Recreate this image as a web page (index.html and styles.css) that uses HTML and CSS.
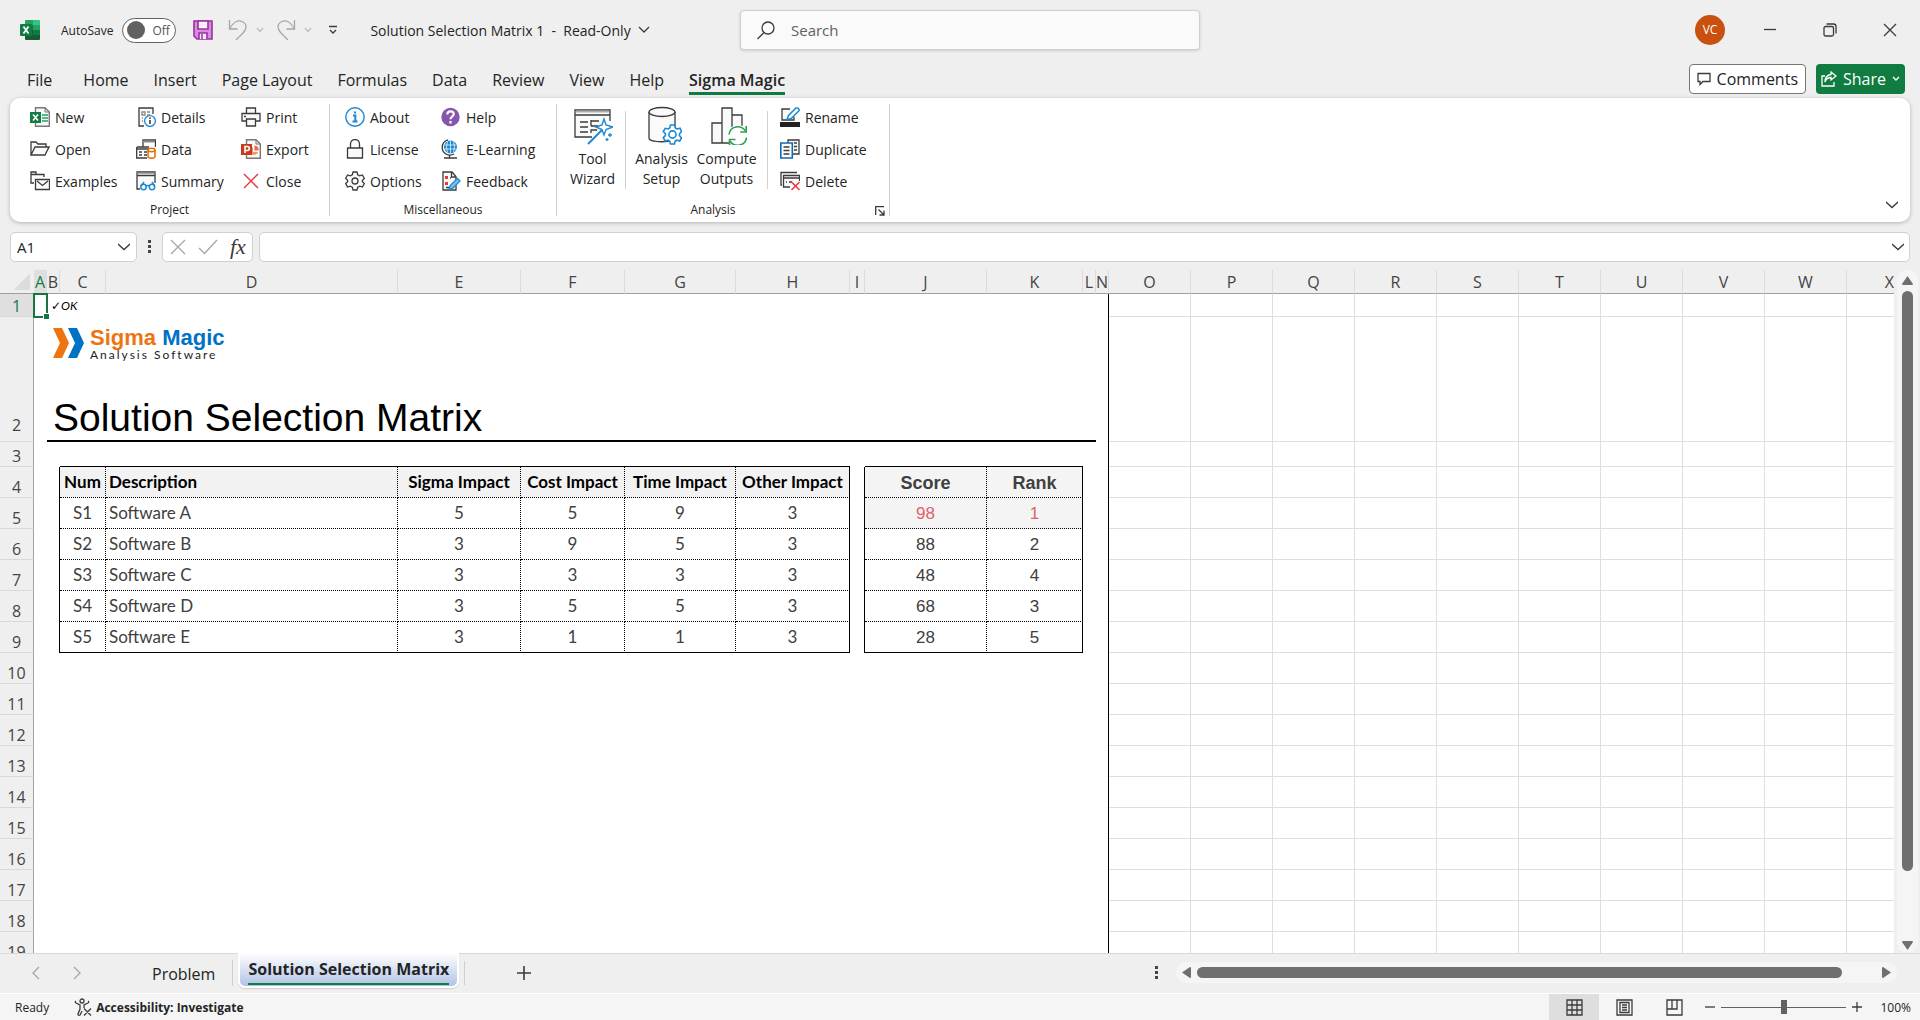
FILE: index.html
```html
<!DOCTYPE html>
<html lang="en">
<head>
    <meta charset="UTF-8">
    <meta name="viewport" content="width=device-width, initial-scale=1.0">
    <title>Solution Selection Matrix 1 - Excel</title>
    <link rel="stylesheet" href="styles.css">
</head>
<body>

    <header class="titlebar">
        <div class="quick-access">
            <svg class="app-icon" width="20" height="20" viewBox="0 0 20 20">
                <path d="M6 0h7v5H5V1q0-1 1-1z" fill="#21a366"/>
                <path d="M13 0h6q1 0 1 1v4h-7z" fill="#33c481"/>
                <path d="M5 5h8v5H5z" fill="#107c41"/>
                <path d="M13 5h7v5h-7z" fill="#21a366"/>
                <path d="M5 10h8v5H5z" fill="#185c37"/>
                <path d="M13 10h7v5h-7z" fill="#107c41"/>
                <path d="M5 15h15v4q0 1-1 1H6q-1 0-1-1z" fill="#185c37"/>
                <rect x="0" y="4" width="12" height="12" rx="1" fill="#107c41"/>
                <path d="M3.5 6.500l5 7M8.500 6.500l-5 7" stroke="#fff" stroke-width="1.800"/>
            </svg>
            <label class="autosave">AutoSave
                <input type="checkbox" class="switch-input">
                <span class="switch"><span class="knob"></span>Off</span>
            </label>
            <button class="icon-btn save" aria-label="Save">
                <svg width="20" height="20" viewBox="0 0 20 20"><path d="M1 1h18v18H4l-3-3z" fill="#d78fdc" stroke="#9a2fa5" stroke-width="1.600"/><path d="M5 1h10v8H5zM6 19v-6h8v6" fill="#f6f2f7" stroke="#9a2fa5" stroke-width="1.600"/><path d="M9 14v5" stroke="#9a2fa5" stroke-width="1.500"/></svg>
            </button>
            <button class="icon-btn undo" aria-label="Undo">
                <svg width="20" height="20" viewBox="0 0 20 20" class="line faded"><path d="M1.500 0v9h8M1.500 9C5 2 10 0 14 1.500c5 2 5 7 1.500 11L8 20"/></svg>
                <svg width="8" height="6" viewBox="0 0 8 6" class="line faint"><path d="M1 1l3 3.500L7 1"/></svg>
            </button>
            <button class="icon-btn redo" aria-label="Redo">
                <svg width="20" height="20" viewBox="0 0 20 20" class="line faded"><path d="M18.500 0v9h-8M18.500 9C15 2 10 0 6 1.500c-5 2-5 7-1.500 11L12 20"/></svg>
                <svg width="8" height="6" viewBox="0 0 8 6" class="line faint"><path d="M1 1l3 3.500L7 1"/></svg>
            </button>
            <button class="icon-btn customize" aria-label="Customize toolbar">
                <svg width="10" height="10" viewBox="0 0 10 10" class="line"><path d="M1 1.500h8M2 5l3 3 3-3"/></svg>
            </button>
            <button class="file-title">Solution Selection Matrix 1&nbsp; -&nbsp; Read-Only
                <svg width="12" height="8" viewBox="0 0 12 8" class="line"><path d="M1 1l5 5 5-5"/></svg>
            </button>
        </div>
        <label class="search">
            <svg width="20" height="20" viewBox="0 0 20 20" class="line"><circle cx="12" cy="8" r="6"/><path d="M8 12.500L1.500 19"/></svg>
            <input type="search" placeholder="Search" aria-label="Search">
        </label>
        <div class="window-controls">
            <span class="avatar">VC</span>
            <button aria-label="Minimize"><svg width="14" height="14" viewBox="0 0 14 14" class="line"><path d="M1 6.500h12"/></svg></button>
            <button aria-label="Restore"><svg width="14" height="14" viewBox="0 0 14 14" class="line"><rect x="1" y="3.500" width="9.500" height="9.500" rx="1.500"/><path d="M3.500 1h7q2.500 0 2.500 2.500v7"/></svg></button>
            <button aria-label="Close"><svg width="14" height="14" viewBox="0 0 14 14" class="line"><path d="M1 1l12 12M13 1L1 13"/></svg></button>
        </div>
    </header>

    <nav class="menu">
        <a href="#" class="file">File</a>
        <a href="#">Home</a>
        <a href="#">Insert</a>
        <a href="#">Page Layout</a>
        <a href="#">Formulas</a>
        <a href="#">Data</a>
        <a href="#">Review</a>
        <a href="#">View</a>
        <a href="#">Help</a>
        <a href="#" class="active">Sigma Magic</a>
        <button class="comments">
            <svg width="14" height="14" viewBox="0 0 14 14" class="line"><path d="M1 1.500h12v8H6l-3 3v-3H1z"/></svg>
            Comments
        </button>
        <button class="share">
            <svg width="16" height="16" viewBox="0 0 16 16" class="line"><path d="M4 5H1v10h12v-4M10 1l5 4-5 4V6.500C7 6.500 5 8 4 11c0-4 2-7 6-7.500z"/></svg>
            Share
            <svg width="8" height="6" viewBox="0 0 8 6" class="line"><path d="M1 1l3 3 3-3"/></svg>
        </button>
    </nav>

    <section class="ribbon">
        <div class="group project">
            <div class="tools">
                <button><svg width="20" height="20" viewBox="0 0 20 20"><path d="M5.500 5V.7H15L19.300 5v14.300H5.500V15" fill="#f7f7f7" stroke="#777" stroke-width="1.400"/><path d="M15 .7V5h4" fill="none" stroke="#777"/><path d="M12 8h6M12 11h6M12 14h6" stroke="#21a366" stroke-width="1.600"/><rect y="5" width="11" height="11" fill="#107c41"/><path d="M3 7.500l5 6M8 7.500l-5 6" stroke="#fff" stroke-width="1.600"/></svg>New</button>
                <button><svg width="20" height="20" viewBox="0 0 20 20" class="line"><path d="M1 16V3h5l2 2h8v3M1 16L5 8h14l-4 8z" fill="#fafafa"/></svg>Open</button>
                <button><svg width="20" height="20" viewBox="0 0 20 20" class="line"><path d="M4 12H1V1h5v2.500h8V6M1 3.500h5"/><path d="M5.500 8.500h14v10h-14z" fill="#fafafa"/><path d="M7 10l5.500 4.500L18 10"/></svg>Examples</button>
                <button><svg width="20" height="20" viewBox="0 0 20 20" class="line"><path d="M8 19H3V1h14v6" fill="#fafafa"/><path d="M6 5h3v3H6zM6 11h1M6 14h1M11 5h3M11 8h3" stroke="#8a8a8a"/><circle cx="14" cy="14" r="5.400" fill="#fff" stroke="#1e88d2"/><path d="M14 13v4M14 10.500v1.500" stroke-width="1.600"/></svg>Details</button>
                <button><svg width="20" height="20" viewBox="0 0 20 20" class="line"><path d="M7 8V1h12.500v7"/><path d="M7 2.500h12" stroke="#8a8a8a" stroke-width="2"/><path d="M1 8h12M.7 8v11H11M1 10h11M3 13h3M3 16h3M8 13h3M8 16h3"/><path d="M12 11v6.500c0 2.300 7 2.300 7 0V11" fill="#fff" stroke="#e36c0a" stroke-width="1.500"/><ellipse cx="15.500" cy="11" rx="3.500" ry="1.700" fill="#fff" stroke="#e36c0a" stroke-width="1.500"/></svg>Data</button>
                <button><svg width="20" height="20" viewBox="0 0 20 20" class="line"><path d="M4 18H1V1h18v11M1 4.500h18" fill="#fafafa"/><path d="M1 2.200h18" stroke="#999"/><g stroke="#1e88d2" stroke-width="1.500" fill="#fff"><circle cx="7.500" cy="16" r="2.700"/><circle cx="16" cy="16" r="2.700"/><path d="M5 15l3-4M18.500 15l-2.500-4M10 15q2-1 3.500 0"/></g></svg>Summary</button>
                <button><svg width="20" height="20" viewBox="0 0 20 20" class="line"><path d="M5.500 6V1h9v5M5 14H1V6.500h18V14h-4" fill="#fafafa"/><path d="M5.500 12h9v7h-9z" fill="#fafafa"/><path d="M3 9.500h2"/></svg>Print</button>
                <button><svg width="20" height="20" viewBox="0 0 20 20"><path d="M5.500 5V.7H15L19.300 5v14.300H5.500V15" fill="#f7f7f7" stroke="#777" stroke-width="1.400"/><path d="M15 .7V5h4" fill="none" stroke="#777"/><path d="M12 8a4 4 0 1 0 5 5h-5z" fill="#ff8f6b"/><path d="M13.500 6.500v5h4a4 4 0 0 0-4-5z" fill="#ed6c47"/><rect y="5" width="11" height="11" fill="#c43e1c"/><path d="M4 14V7.500h2.300a2 2 0 0 1 0 4H4" fill="none" stroke="#fff" stroke-width="1.600"/></svg>Export</button>
                <button><svg width="20" height="20" viewBox="0 0 20 20"><path d="M3 3l14 14M17 3L3 17" stroke="#e8363c" stroke-width="1.400"/></svg>Close</button>
            </div>
            <div class="group-name">Project</div>
        </div>

        <div class="group misc">
            <div class="tools">
                <button><svg width="20" height="20" viewBox="0 0 20 20"><circle cx="10" cy="10" r="9.200" fill="#fafafa" stroke="#1e88d2" stroke-width="1.400"/><path d="M8 8.500h2.300V14M7.500 14.500h5M9 5.500h2" stroke="#1e88d2" stroke-width="2" fill="none"/></svg>About</button>
                <button><svg width="20" height="20" viewBox="0 0 20 20" class="line"><path d="M2.500 9h15v10h-15z" fill="#fafafa"/><path d="M5.500 9V5a4.500 4.500 0 0 1 9 0v4"/></svg>License</button>
                <button><svg width="20" height="20" viewBox="0 0 20 20" class="line"><path d="M8 1h4l.7 2.700 2 1.100 2.700-.8 2 3.500-2 1.900v1.200l2 1.900-2 3.500-2.700-.8-2 1.100L12 19H8l-.7-2.700-2-1.100-2.700.8-2-3.500 2-1.900V9.400l-2-1.900 2-3.500 2.700.8 2-1.100z" fill="#fafafa"/><circle cx="10" cy="10" r="3"/></svg>Options</button>
                <button><svg width="20" height="20" viewBox="0 0 20 20"><circle cx="9.500" cy="10" r="9.200" fill="#8656ac"/><path d="M6.300 7.500C6.300 3.300 12.700 3.300 12.700 7c0 2.500-3.200 2.500-3.200 5.300M9.500 14v2.400" stroke="#fff" stroke-width="2.200" fill="none"/></svg>Help</button>
                <button><svg width="20" height="20" viewBox="0 0 20 20" class="line"><circle cx="9.500" cy="8" r="6.500" fill="#1e88d2" stroke="none"/><path d="M3.500 6h12M3.500 10h12M9.500 1.500v13M6.500 2.500q-2 5.500 0 11M12.500 2.500q2 5.500 0 11" stroke="#fff" stroke-width=".7"/><path d="M7 .8C3 2 1.200 5 1.200 8.500c0 5.500 6 9.500 12 6.500M8.500 16v3M3 19h13"/></svg>E-Learning</button>
                <button><svg width="20" height="20" viewBox="0 0 20 20" class="line"><path d="M2 1h9l4 4.500V19H2z" fill="#fafafa"/><path d="M10.500 1v5H15"/><path d="M4 5h3v3H4zM4 11h3v3H4z" fill="#e8363c" stroke="none"/><path d="M5 16.500h4M9 7h1"/><path d="M8 18.500l1.200-4 7.300-7 2.500 2.500-7.200 7.200z" fill="#7ec0f0" stroke="#1e88d2"/></svg>Feedback</button>
            </div>
            <div class="group-name">Miscellaneous</div>
        </div>

        <div class="group analysis">
            <div class="tools">
                <button class="big"><svg width="40" height="40" viewBox="0 0 40 40" class="line"><path d="M37 16V5H2v27h17M2 10h35" fill="#fafafa"/><path d="M3 6.500h33" stroke="#aaa" stroke-width="2"/><path d="M7 17h8M7 22h8M7 27h8M18 16h8M18 15v6M18 21h7M18 28v-3h6"/><path d="M15 39L29 25" stroke="#1e88d2" stroke-width="2"/><path d="M31 14l2 6 7 2-7 2.500-2 5.500-2-5.500-6-2.500 6-2z" fill="#fff" stroke="#1e88d2" stroke-width="1.400"/><path d="M37 28v4M35 30h4M34 33v3M32.500 34.500h3" stroke="#1e88d2"/></svg>Tool<br>Wizard</button>
                <i class="split"></i>
                <button class="big"><svg width="40" height="40" viewBox="0 0 40 40" class="line"><path d="M7 7v26c0 5 26 5 26 0V7" fill="#fafafa"/><ellipse cx="20" cy="7" rx="13" ry="4.500" fill="#fafafa"/><path d="M28.500 20h4l.8 3 1.700 1 3-.8 1.500 3.300-2 2.200v2l2 2.200-1.800 3.100-2.900-.8-1.700 1-.6 2.800h-4l-.8-2.800-1.700-1-2.900.8-1.800-3.300 2.100-2v-2l-2.100-2.200 1.900-3.200 2.900.7 1.600-1z" fill="#fff" stroke="#1e88d2" stroke-width="1.600"/><circle cx="30.500" cy="29.500" r="3.600" fill="#fff" stroke="#1e88d2" stroke-width="1.600"/></svg>Analysis<br>Setup</button>
                <button class="big"><svg width="40" height="40" viewBox="0 0 40 40" class="line"><path d="M5 18h10v20H5zM15 3h10v35H15zM25 10h10v28H25z" fill="#fafafa"/><circle cx="31" cy="31" r="11" fill="#fff" stroke="none"/><g stroke="#30a14e" stroke-width="1.600"><path d="M22 29.500c1-8.500 12-10.500 16.500-3.500M39.500 32.500c-1 8.500-12 10.500-16.500 3.500"/><path d="M39.200 21v6h-6M22.500 40v-5.500h6"/></g></svg>Compute<br>Outputs</button>
                <i class="split last"></i>
                <div class="stack">
                    <button><svg width="20" height="20" viewBox="0 0 20 20" class="line"><path d="M10 2H2v11h12v-3" fill="#fafafa"/><path d="M0 15h20v5H0z" fill="#222" stroke="none"/><path d="M7 12.500l1.500-4L16 1q3-.5 3.200 2.500l-8 8z" fill="#fff" stroke="#1e88d2" stroke-width="1.500"/></svg>Rename</button>
                    <button><svg width="20" height="20" viewBox="0 0 20 20" class="line"><path d="M8 4V1h11v14h-6M14 4h3M14 7.500h3M14 11h3" fill="#fafafa"/><path d="M.8 4h11.500v15H.8z" fill="#fff" stroke="#1467b8" stroke-width="1.600"/><path d="M3.500 8h6M3.500 11.500h6M3.500 15h6"/></svg>Duplicate</button>
                    <button><svg width="20" height="20" viewBox="0 0 20 20" class="line"><path d="M2 14H1V1.500h16"/><path d="M10 16H3.500V4.500h16V10M3.500 7h16" fill="#fafafa"/><path d="M6 11h1M9 11h3"/><path d="M11.500 11l8 8M19.500 11l-8 8" stroke="#e8363c" stroke-width="1.500"/></svg>Delete</button>
                </div>
            </div>
            <div class="group-name">Analysis</div>
            <button class="launcher" aria-label="Analysis settings"><svg width="10" height="10" viewBox="0 0 10 10" class="line"><path d="M.7 9V.7H9M3.500 3.500L9 9M9 4.500V9H4.500"/></svg></button>
        </div>
        <button class="collapse" aria-label="Collapse ribbon"><svg width="12" height="8" viewBox="0 0 12 8" class="line"><path d="M0 1l6 5.500L12 1"/></svg></button>
    </section>

    <div class="formula-bar">
        <label class="name-box">
            <input type="text" value="A1" aria-label="Name box">
            <svg width="12" height="8" viewBox="0 0 12 8" class="line"><path d="M0 1l6 5.500L12 1"/></svg>
        </label>
        <i class="dots"></i>
        <div class="fx-box">
            <button aria-label="Cancel"><svg width="16" height="16" viewBox="0 0 16 16" class="line faded"><path d="M1 1l14 14M15 1L1 15"/></svg></button>
            <button aria-label="Enter"><svg width="20" height="16" viewBox="0 0 20 16" class="line faded"><path d="M1 9l5.500 5.500L19 1"/></svg></button>
            <button class="fx" aria-label="Insert function">fx</button>
        </div>
        <label class="formula">
            <input type="text" aria-label="Formula">
            <svg width="12" height="8" viewBox="0 0 12 8" class="line"><path d="M0 1l6 5.500L12 1"/></svg>
        </label>
    </div>

    <main class="sheet">
        <div class="sheet-view">
            <table>
                <colgroup>
                    <col class="w-row">
                    <col class="w-thin"><col class="w-thin"><col class="w-c"><col class="w-d"><col class="w-e"><col class="w-f"><col class="w-g"><col class="w-h"><col class="w-i"><col class="w-j"><col class="w-k"><col class="w-thin"><col class="w-thin">
                    <col class="w-std"><col class="w-std"><col class="w-std"><col class="w-std"><col class="w-std"><col class="w-std"><col class="w-std"><col class="w-std"><col class="w-std"><col>
                </colgroup>
                <thead>
                    <tr>
                        <th class="corner"></th>
                        <th class="selected">A</th><th>B</th><th>C</th><th>D</th><th>E</th><th>F</th><th>G</th><th>H</th><th>I</th><th>J</th><th>K</th><th>L</th><th>N</th>
                        <th>O</th><th>P</th><th>Q</th><th>R</th><th>S</th><th>T</th><th>U</th><th>V</th><th>W</th><th class="cut">X</th>
                    </tr>
                </thead>
                <tbody>
                    <tr class="row-1">
                        <th class="selected">1</th>
                        <td class="cursor"><span class="handle"></span></td>
                        <td colspan="12" class="blank status">✓OK</td>
                        <td colspan="10" class="grid"></td>
                    </tr>
                    <tr class="row-2">
                        <th>2</th>
                        <td></td>
                        <td colspan="11" class="banner">
                            <div class="banner-inner">
                                <div class="logo">
                                    <svg width="31" height="30" viewBox="0 0 31 30"><path d="M0 0h9l7 15-7 15H0l7-15z" fill="#ee7411"/><path d="M15 0h9l7 15-7 15h-9l7-15z" fill="#0072c6"/></svg>
                                    <div class="logo-text">
                                        <div class="brand"><span>Sigma</span> Magic</div>
                                        <div class="tagline">Analysis Software</div>
                                    </div>
                                </div>
                                <h1>Solution Selection Matrix</h1>
                            </div>
                        </td>
                        <td class="blank"></td>
                        <td colspan="10" class="grid"></td>
                    </tr>
                    <tr class="row-3">
                        <th>3</th>
                        <td colspan="2"></td><td colspan="6" class="edge"></td><td></td><td colspan="2" class="edge"></td><td colspan="2" class="blank"></td>
                        <td colspan="10" class="grid"></td>
                    </tr>
                    <tr class="matrix head">
                        <th>4</th>
                        <td></td><td class="side"></td>
                        <td>Num</td><td class="desc">Description</td><td>Sigma Impact</td><td>Cost Impact</td><td>Time Impact</td><td class="side">Other Impact</td>
                        <td class="side"></td><td class="result">Score</td><td class="result side">Rank</td>
                        <td></td><td class="blank"></td><td colspan="10" class="grid"></td>
                    </tr>
                    <tr class="matrix best">
                        <th>5</th>
                        <td></td><td class="side"></td>
                        <td>S1</td><td class="desc">Software A</td><td>5</td><td>5</td><td>9</td><td class="side">3</td>
                        <td class="side"></td><td class="result">98</td><td class="result side">1</td>
                        <td></td><td class="blank"></td><td colspan="10" class="grid"></td>
                    </tr>
                    <tr class="matrix">
                        <th>6</th>
                        <td></td><td class="side"></td>
                        <td>S2</td><td class="desc">Software B</td><td>3</td><td>9</td><td>5</td><td class="side">3</td>
                        <td class="side"></td><td class="result">88</td><td class="result side">2</td>
                        <td></td><td class="blank"></td><td colspan="10" class="grid"></td>
                    </tr>
                    <tr class="matrix">
                        <th>7</th>
                        <td></td><td class="side"></td>
                        <td>S3</td><td class="desc">Software C</td><td>3</td><td>3</td><td>3</td><td class="side">3</td>
                        <td class="side"></td><td class="result">48</td><td class="result side">4</td>
                        <td></td><td class="blank"></td><td colspan="10" class="grid"></td>
                    </tr>
                    <tr class="matrix">
                        <th>8</th>
                        <td></td><td class="side"></td>
                        <td>S4</td><td class="desc">Software D</td><td>3</td><td>5</td><td>5</td><td class="side">3</td>
                        <td class="side"></td><td class="result">68</td><td class="result side">3</td>
                        <td></td><td class="blank"></td><td colspan="10" class="grid"></td>
                    </tr>
                    <tr class="matrix end">
                        <th>9</th>
                        <td></td><td class="side"></td>
                        <td>S5</td><td class="desc">Software E</td><td>3</td><td>1</td><td>1</td><td class="side">3</td>
                        <td class="side"></td><td class="result">28</td><td class="result side">5</td>
                        <td></td><td class="blank"></td><td colspan="10" class="grid"></td>
                    </tr>
                    <tr><th>10</th><td colspan="13" class="blank"></td><td colspan="10" class="grid"></td></tr>
                    <tr><th>11</th><td colspan="13" class="blank"></td><td colspan="10" class="grid"></td></tr>
                    <tr><th>12</th><td colspan="13" class="blank"></td><td colspan="10" class="grid"></td></tr>
                    <tr><th>13</th><td colspan="13" class="blank"></td><td colspan="10" class="grid"></td></tr>
                    <tr><th>14</th><td colspan="13" class="blank"></td><td colspan="10" class="grid"></td></tr>
                    <tr><th>15</th><td colspan="13" class="blank"></td><td colspan="10" class="grid"></td></tr>
                    <tr><th>16</th><td colspan="13" class="blank"></td><td colspan="10" class="grid"></td></tr>
                    <tr><th>17</th><td colspan="13" class="blank"></td><td colspan="10" class="grid"></td></tr>
                    <tr><th>18</th><td colspan="13" class="blank"></td><td colspan="10" class="grid"></td></tr>
                    <tr><th>19</th><td colspan="13" class="blank"></td><td colspan="10" class="grid"></td></tr>
                </tbody>
            </table>
        </div>
        <div class="scroll-v">
            <svg width="11" height="9" viewBox="0 0 11 9"><path d="M5.500 0L11 8q0 1-1 1H1q-1 0-1-1z" fill="#6f6f6f"/></svg>
            <div class="track"><div class="thumb"></div></div>
            <svg width="11" height="9" viewBox="0 0 11 9"><path d="M5.500 9L0 1q0-1 1-1h9q1 0 1 1z" fill="#6f6f6f"/></svg>
        </div>
    </main>

    <div class="tabbar">
        <button class="nav-btn" aria-label="Previous sheet"><svg width="8" height="14" viewBox="0 0 8 14" class="line faded"><path d="M7 1L1 7l6 6"/></svg></button>
        <button class="nav-btn" aria-label="Next sheet"><svg width="8" height="14" viewBox="0 0 8 14" class="line faded"><path d="M1 1l6 6-6 6"/></svg></button>
        <button class="tab">Problem</button>
        <button class="tab current"><span>Solution Selection Matrix</span></button>
        <i class="tab-line"></i>
        <button class="add" aria-label="New sheet"><svg width="14" height="14" viewBox="0 0 14 14" class="line"><path d="M7 0v14M0 7h14" stroke-width="1.600"/></svg></button>
        <i class="dots"></i>
        <div class="scroll-h">
            <svg width="9" height="11" viewBox="0 0 9 11"><path d="M0 5.500L8 0q1 0 1 1v9q0 1-1 1z" fill="#6f6f6f"/></svg>
            <div class="track"><div class="thumb"></div></div>
            <svg width="9" height="11" viewBox="0 0 9 11"><path d="M9 5.500L1 0Q0 0 0 1v9q0 1 1 1z" fill="#6f6f6f"/></svg>
        </div>
    </div>

    <footer class="statusbar">
        <span class="ready">Ready</span>
        <button class="access">
            <svg width="18" height="18" viewBox="0 0 18 18" class="line"><circle cx="8" cy="3" r="2"/><path d="M2 3q-1.500 1 0 2l4 2v4l-2 5q0 2 2 1l2-4M14 3q1.500 1 0 2l-4 2v3M10 10.500l7 7M17 10.500l-7 7"/></svg>
            Accessibility: Investigate
        </button>
        <div class="views">
            <button class="on" aria-label="Normal"><svg width="17" height="17" viewBox="0 0 17 17" class="line"><path d="M1 1h15v15H1zM1 6h15M1 11h15M6 1v15M11 1v15"/></svg></button>
            <button aria-label="Page layout"><svg width="17" height="17" viewBox="0 0 17 17" class="line"><path d="M1 1h15v15H1zM4 3.500h9v10H4zM6 6h5M6 8.500h5M6 11h5"/></svg></button>
            <button aria-label="Page break preview"><svg width="17" height="17" viewBox="0 0 17 17" class="line"><path d="M1 1h15v15H1zM1 10h10V1M6 1v9"/></svg></button>
        </div>
        <button class="zoom-btn" aria-label="Zoom out"><svg width="10" height="10" viewBox="0 0 10 10" class="line"><path d="M0 5h10"/></svg></button>
        <input type="range" class="zoom" min="0" max="100" value="50" aria-label="Zoom">
        <button class="zoom-btn" aria-label="Zoom in"><svg width="10" height="10" viewBox="0 0 10 10" class="line"><path d="M0 5h10M5 0v10"/></svg></button>
        <span class="percent">100%</span>
    </footer>

</body>
</html>
```
FILE: styles.css
```css
* {
    box-sizing: border-box;
}

body {
    font-family: "Open Sans", "Noto Sans", sans-serif;
    font-size: 14px;
    color: #242424;
    background-color: #efefef;
    margin: 0;
    height: 100vh;
    display: flex;
    flex-direction: column;
    overflow: hidden;
}

button {
    font: inherit;
    color: inherit;
    background: none;
    border: none;
    padding: 0;
    display: flex;
    align-items: center;
    white-space: nowrap;
    cursor: pointer;
}

input {
    font: inherit;
    color: inherit;
    border: none;
    background: none;
    outline: none;
    padding: 0;
    min-width: 0;
}

svg {
    display: block;
    flex-shrink: 0;
}

.line {
    fill: none;
    stroke: #3b3b3b;
    stroke-width: 1.3;
}

.faded {
    stroke: #a6a6a6;
}

.faint {
    stroke: #bdbdbd;
}

/* title bar */
.titlebar {
    display: grid;
    grid-template-columns: 37fr 23fr 36fr;
    align-items: center;
    height: 60px;
    flex-shrink: 0;
}

.quick-access {
    display: flex;
    align-items: center;
    padding-left: 20px;
}

.autosave {
    display: flex;
    align-items: center;
    gap: 9px;
    margin-left: 21px;
    font-size: 12px;
}

.switch-input {
    position: absolute;
    opacity: 0;
}

.switch {
    display: flex;
    align-items: center;
    gap: 7px;
    width: 54px;
    height: 25px;
    padding-left: 4px;
    border: 1px solid #616161;
    border-radius: 13px;
    background-color: #fff;
    color: #555;
}

.knob {
    width: 18px;
    height: 18px;
    border-radius: 50%;
    background-color: #616161;
}

.icon-btn {
    gap: 8px;
}

.save {
    margin-left: 17px;
}

.undo {
    margin-left: 15px;
}

.redo {
    margin-left: 12px;
}

.customize {
    margin-left: 16px;
}

.file-title {
    gap: 7px;
    margin-left: 32px;
}

.search {
    display: flex;
    align-items: center;
    gap: 15px;
    height: 40px;
    padding: 0 15px;
    background-color: #fafafa;
    border: 1px solid #cfcfcf;
    border-radius: 4px;
    box-shadow: 0 1px 3px rgba(0, 0, 0, 0.15);
}

.search input {
    flex: 1;
    font-size: 15px;
}

.search input::placeholder {
    color: #616161;
}

.window-controls {
    display: flex;
    justify-content: flex-end;
    align-items: center;
}

.window-controls button {
    width: 60px;
    height: 40px;
    justify-content: center;
}

.avatar {
    width: 30px;
    height: 30px;
    margin-right: 15px;
    border-radius: 50%;
    background-color: #ca5010;
    color: #fff;
    font-size: 12px;
    line-height: 30px;
    text-align: center;
}

/* menu tabs */
.menu {
    display: flex;
    align-items: flex-start;
    gap: 25px;
    height: 38px;
    padding: 4px 15px 0 27px;
    font-size: 16px;
    flex-shrink: 0;
}

.menu a {
    color: #242424;
    text-decoration: none;
    line-height: 32px;
    height: 31px;
}

.menu .file {
    margin-right: 6px;
}

.menu .active {
    font-weight: 600;
    border-bottom: 3px solid #107c41;
}

.comments, .share {
    height: 30px;
    border-radius: 4px;
    gap: 6px;
    padding: 0 5px;
}

.comments {
    margin-left: auto;
    padding: 0 7px;
    background-color: #fff;
    border: 1px solid #767676;
}

.share {
    margin-left: -15px;
    background-color: #107c41;
    color: #fff;
}

.share .line {
    stroke: #fff;
}

/* ribbon */
.ribbon {
    display: flex;
    height: 124px;
    margin: 0 10px;
    padding: 4px 0;
    background-color: #fff;
    border-radius: 10px;
    box-shadow: 0 1px 4px rgba(0, 0, 0, 0.25);
    flex-shrink: 0;
}

.group {
    position: relative;
    border-right: 1px solid #d0d0d0;
    margin: 2px 0;
}

.tools {
    display: grid;
    grid-template-rows: repeat(3, 32px);
    grid-auto-flow: column;
    margin-top: -3px;
}

.tools button {
    gap: 5px;
}

.project .tools {
    grid-template-columns: 106px 105px 88px;
    padding-left: 20px;
}

.misc .tools {
    grid-template-columns: 96px 115px;
    padding-left: 15px;
}

.analysis .tools {
    display: flex;
    padding-left: 3px;
}

.tools .big {
    flex-direction: column;
    gap: 4px;
    width: 65px;
    padding-top: 4px;
    line-height: 20px;
}

.split {
    width: 1px;
    height: 78px;
    margin: 10px 3px 0 0;
    background-color: #d0d0d0;
}

.split.last {
    margin: 10px 12px 0 8px;
}

.stack {
    display: grid;
    grid-template-rows: repeat(3, 32px);
    width: 109px;
}

.group-name {
    font-size: 12px;
    line-height: 26px;
    text-align: center;
}

.analysis .group-name {
    padding-right: 20px;
}

.launcher {
    position: absolute;
    right: 4px;
    bottom: 0;
}

.collapse {
    align-self: flex-end;
    margin: 0 12px 9px auto;
}

/* formula bar */
.formula-bar {
    display: flex;
    align-items: center;
    margin: 10px 10px 8px;
    height: 30px;
    flex-shrink: 0;
}

.name-box, .fx-box, .formula {
    display: flex;
    align-items: center;
    height: 30px;
    background-color: #fff;
    border: 1px solid #d0d0d0;
    border-radius: 5px;
}

.name-box {
    width: 127px;
    padding: 0 6px;
}

.name-box input, .formula input {
    flex: 1;
    font-size: 15px;
}

.dots {
    width: 3px;
    height: 14px;
    background: repeating-linear-gradient(#444 0 3px, transparent 3px 5px);
}

.formula-bar .dots {
    margin: 0 11px;
}

.fx-box {
    gap: 12px;
    width: 91px;
    padding-left: 7px;
}

.fx {
    font-family: "Liberation Serif", serif;
    font-style: italic;
    font-size: 22px;
    color: #3b3b3b;
}

.formula {
    flex: 1;
    margin-left: 6px;
    padding: 0 5px;
}

/* worksheet */
.sheet {
    display: flex;
    flex: 1;
    min-height: 0;
}

.sheet-view {
    flex: 1;
    overflow: hidden;
}

table {
    width: 100%;
    table-layout: fixed;
    border-collapse: separate;
    border-spacing: 0;
    background-color: #fff;
}

.w-row { width: 34px; }
.w-thin { width: 13px; }
.w-c { width: 46px; }
.w-d { width: 292px; }
.w-e { width: 123px; }
.w-f { width: 104px; }
.w-g { width: 111px; }
.w-h { width: 114px; }
.w-i { width: 15px; }
.w-j { width: 122px; }
.w-k { width: 96px; }
.w-std { width: 82px; }

th, td {
    padding: 0;
    white-space: nowrap;
}

th {
    font-size: 16px;
    font-weight: normal;
    line-height: 20px;
    color: #444;
    background-color: #efefef;
}

thead th {
    height: 24px;
    border-right: 1px solid #dcdcdc;
    border-bottom: 1px solid #a0a0a0;
}

thead .corner {
    border-right-color: #efefef;
    background: linear-gradient(135deg, #efefef 50%, #dcdcdc 50%) no-repeat 14px 4px / 16px 16px #efefef;
}

thead .cut {
    text-align: right;
    border-right: none;
}

tbody tr {
    height: 31px;
}

tbody th {
    vertical-align: bottom;
    border-right: 1px solid #a0a0a0;
    border-bottom: 1px solid #d8d8d8;
}

th.selected {
    color: #107c41;
    background-color: #dfdfdf;
}

.row-1 {
    height: 23px;
}

.row-2 {
    height: 125px;
}

.row-2 th {
    padding-bottom: 6px;
}

.row-3 {
    height: 25px;
}

.blank {
    border-right: 1px solid #000;
}

.grid {
    border-bottom: 1px solid #dedede;
    background: repeating-linear-gradient(to right, #fff 0 81px, #dedede 81px 82px);
}

.cursor {
    position: relative;
    outline: 2px solid #1a7343;
    outline-offset: -1px;
}

.handle {
    position: absolute;
    right: -2px;
    bottom: -2px;
    width: 5px;
    height: 5px;
    background-color: #1a7343;
    border: 1px solid #fff;
    border-width: 1px 0 0 1px;
    box-sizing: content-box;
}

.status {
    font-family: Lato, "DejaVu Sans", sans-serif;
    font-style: italic;
    font-size: 12px;
    line-height: 16px;
    color: #000;
    padding-left: 4px;
}

.banner {
    border-bottom: 2px solid #000;
    vertical-align: top;
}

.banner-inner {
    display: flex;
    flex-direction: column;
    justify-content: space-between;
    height: 123px;
    padding: 11px 0 0 6px;
}

.logo {
    display: flex;
    align-items: flex-start;
    gap: 6px;
}

.brand {
    font-family: "Liberation Sans", sans-serif;
    font-weight: bold;
    font-size: 22px;
    line-height: 20px;
    color: #0072c6;
}

.brand span {
    color: #ee7411;
}

.tagline {
    font-family: Lato, sans-serif;
    font-size: 12px;
    line-height: 14px;
    letter-spacing: 2px;
    color: #222;
}

h1 {
    font-family: "Liberation Sans", sans-serif;
    font-weight: normal;
    font-size: 39px;
    line-height: 45px;
    color: #000;
    margin: 0;
}

.edge {
    border-bottom: 1px solid #000;
}

.matrix td {
    font-family: Lato, sans-serif;
    font-size: 17px;
    line-height: 20px;
    text-align: center;
    color: #404040;
}

/* columns C to H, then J and K */
.matrix td:nth-child(n+4):nth-child(-n+9),
.matrix .result {
    border-right: 1px dotted #000;
    border-bottom: 1px dotted #000;
}

.matrix.end td:nth-child(n+4):nth-child(-n+9),
.matrix.end .result {
    border-bottom-style: solid;
}

.matrix td.side:nth-child(n) {
    border-right: 1px solid #000;
}

.matrix .desc {
    text-align: left;
    padding-left: 3px;
}

.matrix.head td:nth-child(n+4):nth-child(-n+9) {
    font-weight: bold;
    color: #000;
    background-color: #f2f2f2;
}

.matrix .result {
    font-family: "Liberation Sans", sans-serif;
    padding-top: 2px;
}

.matrix.head .result {
    font-size: 18px;
    font-weight: bold;
    background-color: #f4f4f4;
}

.matrix.best .result {
    color: #e3606b;
    background-color: #f4f4f4;
}

/* scroll bars */
.scroll-v {
    display: flex;
    flex-direction: column;
    align-items: center;
    gap: 6px;
    width: 21px;
    margin: 0 2px 0 3px;
    padding: 6px 0 3px;
    background-color: #f5f5f5;
    border-radius: 10px;
}

.track {
    flex: 1;
}

.thumb {
    background-color: #6f6f6f;
    border-radius: 6px;
}

.scroll-v .thumb {
    width: 11px;
    height: 90%;
}

.scroll-h {
    display: flex;
    align-items: center;
    gap: 6px;
    width: 721px;
    height: 21px;
    margin: 0 23px 0 18px;
    padding: 0 6px;
    background-color: #f5f5f5;
    border-radius: 10px;
}

.scroll-h .thumb {
    width: 95%;
    height: 11px;
}

/* sheet tabs */
.tabbar {
    display: flex;
    align-items: center;
    height: 41px;
    padding: 0 0 2px 32px;
    border-top: 1px solid #d8d8d8;
    border-bottom: 1px solid #fff;
    font-size: 16px;
    flex-shrink: 0;
}

.nav-btn {
    width: 41px;
}

.tab {
    padding: 2px 17px 0 38px;
    line-height: 24px;
    border-right: 1px solid #cfcfcf;
}

.tab.current {
    align-self: flex-start;
    height: 35px;
    margin: -1px 5px 0 5px;
    padding: 0 8px;
    font-weight: bold;
    background: linear-gradient(#fff, #b1c3e6);
    border: 2px solid #fff;
    border-top: none;
    border-radius: 0 0 7px 7px;
    box-shadow: 0 1px 1px #d0d0d0;
}

.tab.current span {
    line-height: 28px;
    border-bottom: 2px solid #107c41;
}

.tab-line {
    width: 1px;
    height: 24px;
    background-color: #cfcfcf;
}

.add {
    margin: 0 auto 0 52px;
}

/* status bar */
.statusbar {
    display: flex;
    align-items: center;
    height: 26px;
    padding: 0 9px 0 15px;
    background-color: #f5f5f5;
    font-size: 12px;
    flex-shrink: 0;
}

.access {
    gap: 4px;
    margin-left: 25px;
    font-weight: bold;
}

.views {
    display: flex;
    margin-left: auto;
    margin-right: 6px;
}

.views button {
    width: 50px;
    height: 26px;
    justify-content: center;
}

.views .on {
    background-color: #dedede;
}

.zoom {
    appearance: none;
    width: 125px;
    height: 14px;
    margin: 0 6px;
    background: linear-gradient(#616161, #616161) no-repeat center / 100% 1px;
}

.zoom::-webkit-slider-thumb {
    appearance: none;
    width: 6px;
    height: 14px;
    background-color: #616161;
}

.percent {
    width: 49px;
    text-align: right;
}
```
